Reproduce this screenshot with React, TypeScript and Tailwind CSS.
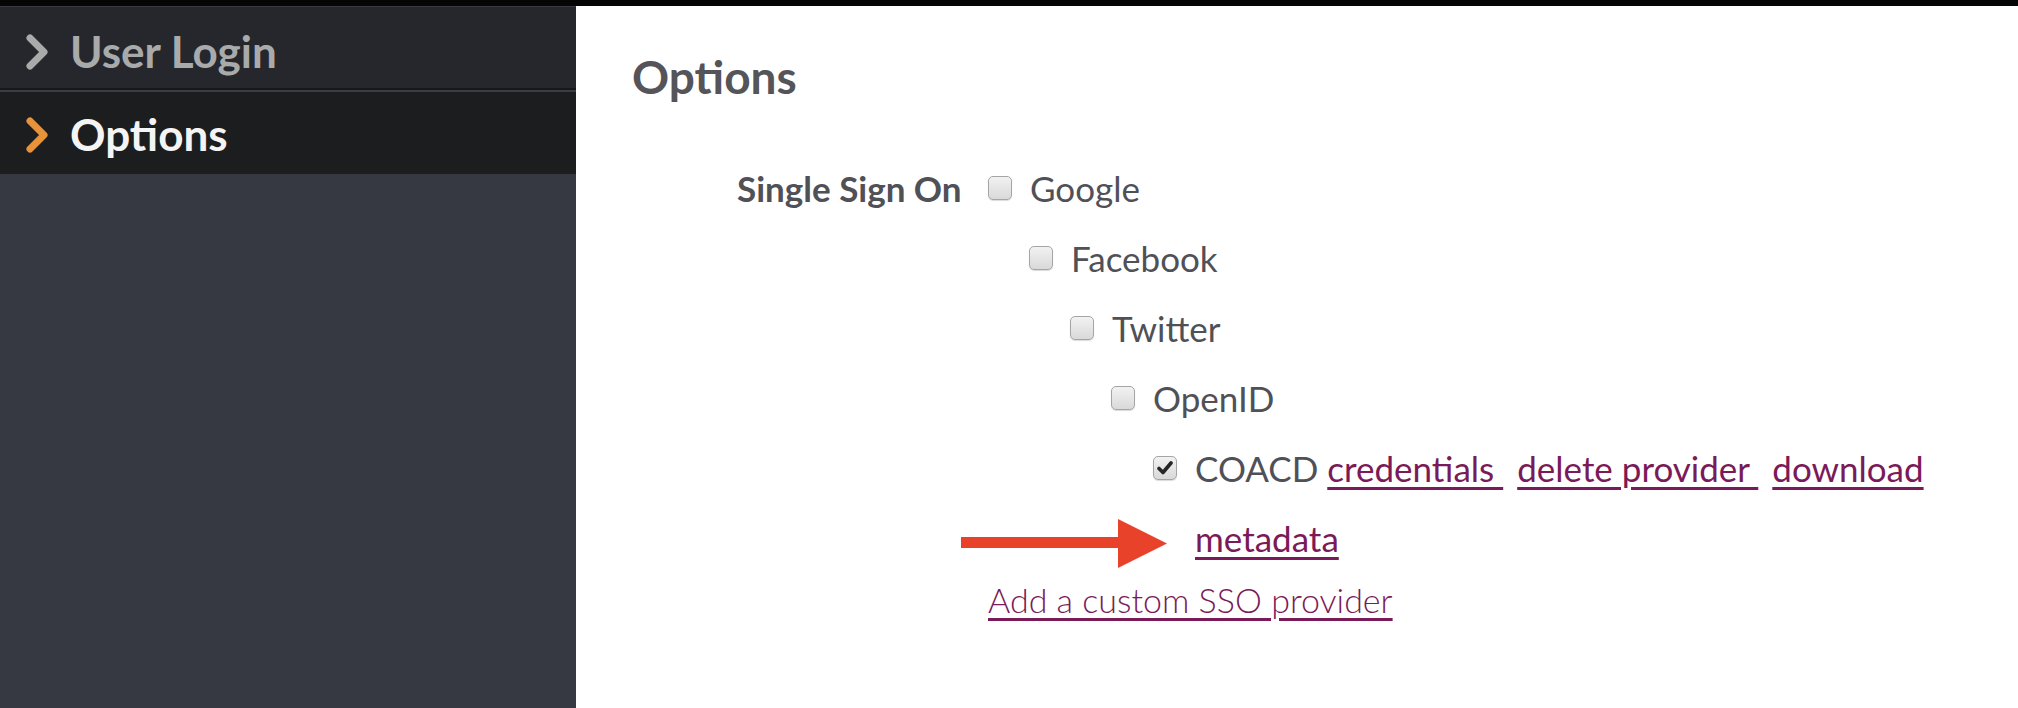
import React from "react";

const Chevron = ({ color }: { color: string }) => (
  <svg width="26" height="38" viewBox="0 0 26 38" className="shrink-0">
    <polyline
      points="6,5 20,19 6,33"
      fill="none"
      stroke={color}
      strokeWidth="7"
      strokeLinecap="round"
      strokeLinejoin="round"
    />
  </svg>
);

const Box = ({ checked = false }: { checked?: boolean }) => (
  <span className="relative inline-flex h-[24px] w-[24px] shrink-0 items-center justify-center rounded-[5px] border border-[#a5a5a5] bg-gradient-to-b from-[#f2f2f2] to-[#d9d9d9] shadow-[0_1px_1px_rgba(0,0,0,0.15)]">
    {checked && (
      <svg width="16" height="14" viewBox="0 0 16 14">
        <path d="M2 7.5 L6 11.5 L14 2" fill="none" stroke="#262626" strokeWidth="3.6" strokeLinecap="round" strokeLinejoin="round" />
      </svg>
    )}
  </span>
);

const Row = ({ label, indent }: { label: string; indent: string }) => (
  <div className={`flex h-[70px] items-center gap-[18px] ${indent}`}>
    <Box />
    <span>{label}</span>
  </div>
);

export default function App() {
  return (
    <div
      className="flex min-h-[708px] w-[2018px] flex-col bg-white"
      style={{ fontFamily: "Lato, 'Open Sans', sans-serif" }}
    >
      <div className="h-[6px] bg-[#050505]" />
      <div className="flex flex-1">
        <aside className="flex w-[576px] shrink-0 flex-col bg-[#363941]">
          <div className="flex h-[82px] items-center gap-[20px] border-t border-[#3a3b41] bg-[#26272c] pl-[24px] pt-[8px]">
            <Chevron color="#a9abab" />
            <span className="text-[44px] font-bold leading-[1.2] text-[#a9abab]">User Login</span>
          </div>
          <div className="h-[2px] bg-[#17181a]" />
          <div className="flex h-[84px] items-center gap-[20px] border-t-2 border-[#3b3d42] bg-[#1c1d1f] pl-[24px] pt-[3px]">
            <Chevron color="#e8923a" />
            <span className="text-[44px] font-bold leading-[1.2] text-[#f4f4f4]">Options</span>
          </div>
        </aside>
        <main className="relative flex-1 bg-white pl-[56px] pt-[43px] text-[#505057]">
          <h1 className="text-[46px] font-bold leading-[1.2] text-[#545459]">Options</h1>
          <div className="ml-[105px] mt-[49px] flex items-start gap-[28px] text-[35px]">
            <div className="w-[223px] whitespace-nowrap font-bold leading-[70px]">Single Sign On</div>
            <div>
              <Row label="Google" indent="ml-0" />
              <Row label="Facebook" indent="ml-[41px]" />
              <Row label="Twitter" indent="ml-[82px]" />
              <Row label="OpenID" indent="ml-[123px]" />
              <div className="ml-[165px] flex items-start gap-[18px]">
                <div className="flex h-[70px] items-center">
                  <Box checked />
                </div>
                <div className="leading-[70px]">
                  COACD{" "}
                  <a href="#" className="mr-[14px] text-[#7b1a58] underline underline-offset-[5px]">
                    credentials&nbsp;
                  </a>
                  <a href="#" className="mr-[14px] text-[#7b1a58] underline underline-offset-[5px]">
                    delete provider&nbsp;
                  </a>
                  <a href="#" className="text-[#7b1a58] underline underline-offset-[5px]">
                    download
                    <br />
                    metadata
                  </a>
                </div>
              </div>
              <div className="leading-[52px]">
                <a href="#" className="text-[34px] font-light text-[#7b1a58] underline underline-offset-[5px]">
                  Add a custom SSO provider
                </a>
              </div>
            </div>
          </div>
          <svg
            className="absolute left-[385px] top-[513px]"
            width="206"
            height="49"
            viewBox="0 0 206 49"
          >
            <rect x="0" y="18" width="160" height="11" fill="#e8432a" />
            <polygon points="157,0 206,24.5 157,49" fill="#e8432a" />
          </svg>
        </main>
      </div>
    </div>
  );
}
